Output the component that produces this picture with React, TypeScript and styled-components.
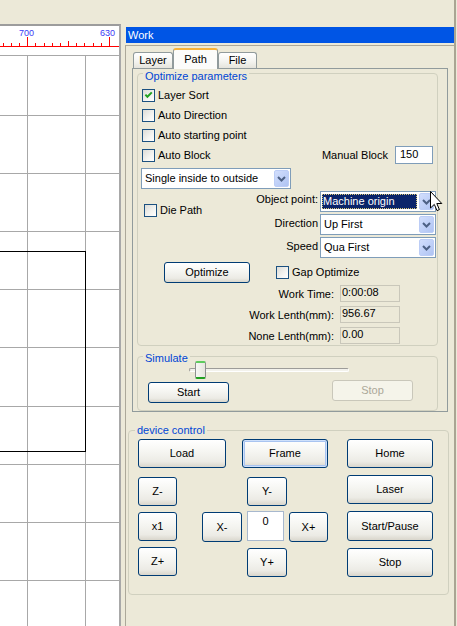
import React from "react";
import styled, { createGlobalStyle, css } from "styled-components";

const GlobalStyle = createGlobalStyle`
  html, body { margin: 0; padding: 0; background: #ECE9D8; overflow: hidden; }
  body { font-family: "Liberation Sans", Arial, sans-serif; font-size: 11px; color: #000; }
  * { box-sizing: border-box; }
`;

const Screen = styled.div`
  position: relative;
  display: flex;
  width: 457px;
  height: 626px;
  overflow: hidden;
  background: #ECE9D8;
`;

/* ---------- left drawing canvas ---------- */
const CanvasColumn = styled.div`
  width: 121px;
  flex: none;
  display: flex;
  flex-direction: column;
  padding-top: 24px;
`;

const CanvasFrame = styled.div`
  flex: 1;
  border-top: 2px solid #9C9C9C;
  border-right: 2px solid #A8A8A8;
  background: #fff;
  overflow: hidden;
  svg { display: block; }
`;

/* ---------- right dock ---------- */
const DockColumn = styled.div`
  flex: 1;
  display: flex;
  padding-left: 4px;
  padding-right: 1px;
`;

const Dock = styled.div`
  flex: 1;
  display: flex;
  flex-direction: column;
  border-right: 2px solid #A9A593;
`;

const TitleBar = styled.div`
  margin: 27px 0 0 1px;
  height: 16px;
  background: #0055E5;
  color: #fff;
  font-size: 11px;
  line-height: 16px;
  padding-left: 2px;
`;

const DockBody = styled.div`
  margin-top: 2px;
  flex: 1;
  border-top: 1px solid #ACA899;
  border-left: 1px solid #ACA899;
  display: flex;
  flex-direction: column;
  align-items: flex-start;
`;

/* ---------- tabs ---------- */
const TabControl = styled.div`
  margin: 2px 0 0 6px;
  width: 316px;
  display: flex;
  flex-direction: column;
`;

const TabStrip = styled.div`
  position: relative;
  z-index: 1;
  display: flex;
  align-items: flex-end;
  height: 20px;
  padding-left: 1px;
`;

const Tab = styled.div<{ $active?: boolean; $w: number }>`
  width: ${(p) => p.$w}px;
  height: 16px;
  border: 1px solid #919B9C;
  border-bottom: none;
  border-radius: 3px 3px 0 0;
  background: linear-gradient(#FFFFFF, #F4F4F0 55%, #E5E4DC);
  text-align: center;
  line-height: 15px;
  ${(p) =>
    p.$active &&
    css`
      height: 21px;
      margin-bottom: -1px;
      border-top: 2px solid #F7B23B;
      padding-top: 1px;
      line-height: 16px;
      background: #FCFCFA;
    `}
`;

const TabPage = styled.div`
  border: 1px solid #919B9C;
  padding: 4px 0 0 4px;
  display: flex;
  flex-direction: column;
  align-items: flex-start;
`;

/* ---------- group boxes ---------- */
const GroupBox = styled.div<{ $w: number; $mt?: number; $ml?: number }>`
  position: relative;
  width: ${(p) => p.$w}px;
  margin-top: ${(p) => p.$mt ?? 0}px;
  margin-left: ${(p) => p.$ml ?? 0}px;
  border: 1px solid #D0D0BF;
  border-radius: 4px;
  display: flex;
  flex-direction: column;
  align-items: flex-start;
`;

const GroupTitle = styled.span<{ $top: number; $left?: number }>`
  position: absolute;
  top: ${(p) => p.$top}px;
  left: ${(p) => p.$left ?? 5}px;
  padding: 0 2px;
  background: #ECE9D8;
  color: #0046D5;
  line-height: 13px;
  white-space: nowrap;
`;

/* ---------- checkbox ---------- */
const CheckBoxBox = styled.span`
  width: 13px;
  height: 13px;
  flex: none;
  border: 1px solid #1C5180;
  background: linear-gradient(135deg, #DCDCD7 0%, #F4F4F1 60%, #FFFFFF 100%);
  svg { display: block; }
`;

const CheckRow = styled.div<{ $ml?: number }>`
  display: flex;
  align-items: center;
  gap: 3px;
  height: 20px;
  margin-left: ${(p) => p.$ml ?? 0}px;
  line-height: 13px;
  white-space: nowrap;
`;

const Check = ({ checked }: { checked?: boolean }) => (
  <CheckBoxBox>
    {checked && (
      <svg width="11" height="11" viewBox="1 1 11 11">
        <path d="M3.4 5.6 L5.4 7.8 L9.8 3.4" fill="none" stroke="#21A121" strokeWidth="2" />
      </svg>
    )}
  </CheckBoxBox>
);

/* ---------- inputs ---------- */
const TextInput = styled.div<{ $w: number; $h: number }>`
  width: ${(p) => p.$w}px;
  height: ${(p) => p.$h}px;
  border: 1px solid #7F9DB9;
  background: #fff;
  padding-left: 4px;
  line-height: 15px;
`;

const SelectBox = styled.div<{ $w: number; $h: number; $ml?: number }>`
  width: ${(p) => p.$w}px;
  height: ${(p) => p.$h}px;
  margin-left: ${(p) => p.$ml ?? 0}px;
  border: 1px solid #7F9DB9;
  background: #fff;
  display: flex;
  align-items: stretch;
  padding: 1px;
`;

const SelectValue = styled.span<{ $focused?: boolean }>`
  flex: 1;
  display: flex;
  align-items: center;
  padding-left: 2px;
  line-height: 13px;
  white-space: nowrap;
  overflow: hidden;
  ${(p) =>
    p.$focused &&
    css`
      flex: none;
      width: 95px;
      margin: 1px 0 1px 0;
      padding-left: 1px;
      background: #0A246A;
      color: #fff;
      outline: 1px dotted #D8C878;
      outline-offset: -1px;
    `}
`;

const DropButton = styled.span`
  margin-left: auto;
  width: 15px;
  flex: none;
  border: 1px solid #BCCDF6;
  border-radius: 2px;
  background: linear-gradient(135deg, #D2DEFC 0%, #BFD0F8 55%, #AFC3F2 100%);
  display: flex;
  align-items: center;
  justify-content: center;
  svg { display: block; }
`;

const Select = ({ value, w, h, ml, focused }: { value: string; w: number; h: number; ml?: number; focused?: boolean }) => (
  <SelectBox $w={w} $h={h} $ml={ml}>
    <SelectValue $focused={focused}>{value}</SelectValue>
    <DropButton>
      <svg width="9" height="6" viewBox="0 0 9 6">
        <path d="M1 1 L4.5 4.5 L8 1" fill="none" stroke="#4D6185" strokeWidth="2" />
      </svg>
    </DropButton>
  </SelectBox>
);

const ReadField = styled.div`
  width: 60px;
  height: 17px;
  border: 1px solid #C9C7BA;
  background: #ECE9D8;
  padding-left: 1px;
  line-height: 13px;
`;

/* ---------- buttons ---------- */
const Button = styled.button<{ $w: number; $h: number; $focus?: boolean; $ml?: number; $mt?: number }>`
  width: ${(p) => p.$w}px;
  height: ${(p) => p.$h}px;
  margin-left: ${(p) => p.$ml ?? 0}px;
  margin-top: ${(p) => p.$mt ?? 0}px;
  flex: none;
  padding: 0;
  font-family: inherit;
  font-size: 11px;
  color: #000;
  line-height: 13px;
  border: 1px solid #003C74;
  border-radius: 3px;
  background: linear-gradient(#FFFFFF 0%, #F5F5F1 45%, #ECEBE5 80%, #D9D6CC 100%);
  ${(p) =>
    p.$focus &&
    css`
      box-shadow: inset 0 0 0 1px #CEE0FB, inset 0 0 0 2px #A9C4F0;
    `}
  &:disabled {
    border-color: #C9C7BA;
    color: #ACA899;
    background: #F5F4EA;
  }
`;

/* ---------- optimize parameter layout ---------- */
const OptimizeInner = styled.div`
  display: flex;
  flex-direction: column;
  align-items: stretch;
  width: 100%;
  padding: 11px 0 1px 4px;
`;

const SplitRow = styled.div`
  display: flex;
  align-items: center;
  justify-content: space-between;
  padding-right: 4px;
`;

const InlinePair = styled.div`
  display: flex;
  align-items: center;
  gap: 7px;
  line-height: 13px;
`;

const SelectSlot = styled.div`
  margin-top: 3px;
  margin-left: -1px;
`;

const OptionBlock = styled.div`
  display: flex;
  justify-content: space-between;
  align-items: flex-start;
  margin-top: 2px;
  padding: 0 1px 0 2px;
`;

const DiePathSlot = styled.div`
  padding-top: 9px;
`;

const LabeledGrid = styled.div`
  display: grid;
  grid-template-columns: auto 116px;
  grid-auto-rows: 21px;
  column-gap: 2px;
  row-gap: 2px;
`;

const GridLabel = styled.span<{ $pt?: number }>`
  justify-self: end;
  padding-top: ${(p) => p.$pt ?? 3}px;
  line-height: 13px;
  white-space: nowrap;
`;

const ActionRow = styled.div`
  display: flex;
  align-items: center;
  gap: 26px;
  margin-top: 4px;
  padding-left: 22px;
`;

const StatsGrid = styled.div`
  display: grid;
  grid-template-columns: 1fr 60px;
  column-gap: 6px;
  row-gap: 4px;
  margin-top: 2px;
  padding-right: 37px;
`;

const StatLabel = styled.span`
  justify-self: end;
  padding-top: 3px;
  line-height: 13px;
  white-space: nowrap;
`;

/* ---------- simulate ---------- */
const SimulateInner = styled.div`
  display: flex;
  flex-direction: column;
  width: 100%;
  padding: 4px 0 7px 0;
`;

const Slider = styled.div`
  position: relative;
  width: 160px;
  height: 18px;
  margin-left: 51px;
  padding-top: 7px;
`;

const SliderTrack = styled.div`
  height: 4px;
  border: 1px solid;
  border-color: #9D9C99 #FFFFFF #FFFFFF #9D9C99;
  border-radius: 2px;
  background: #F3F2EC;
`;

const SliderThumb = styled.div`
  position: absolute;
  left: 6px;
  top: 0;
  width: 11px;
  height: 18px;
  border: 1px solid #8E8F8F;
  border-top: 2px solid #5DCB5D;
  border-bottom: 2px solid #21A121;
  border-radius: 2px;
  background: linear-gradient(90deg, #F7F7F4, #E6E5DE);
`;

const SimButtons = styled.div`
  display: flex;
  align-items: flex-start;
  margin-top: 3px;
  padding: 0 24px 0 10px;
  justify-content: space-between;
`;

/* ---------- device control ---------- */
const DeviceInner = styled.div`
  display: flex;
  flex-direction: column;
  padding: 8px 0 17px 9px;
`;

const DeviceTopRow = styled.div`
  display: flex;
  gap: 16px;
  & > :last-child { margin-left: 3px; }
`;

const DeviceBottom = styled.div`
  display: flex;
  align-items: flex-start;
  margin-top: 7px;
`;

const ButtonColumn = styled.div<{ $ml?: number; $mt?: number; $gap: number }>`
  display: flex;
  flex-direction: column;
  gap: ${(p) => p.$gap}px;
  margin-left: ${(p) => p.$ml ?? 0}px;
  margin-top: ${(p) => p.$mt ?? 0}px;
`;

const JogGrid = styled.div`
  display: grid;
  grid-template-columns: 45px 42px 39px;
  grid-template-rows: 29px 30px 29px;
  row-gap: 6px;
  margin-left: 25px;
  margin-top: 2px;
  align-items: start;
`;

const StepInput = styled.div`
  width: 37px;
  height: 30px;
  margin-top: -1px;
  border: 1px solid #A7B8CE;
  background: #fff;
  text-align: center;
  padding-top: 3px;
  line-height: 13px;
`;

const Cursor = styled.svg`
  position: absolute;
  left: 430px;
  top: 191px;
`;

/* ---------- canvas drawing ---------- */
const ticks = Array.from({ length: 14 }, (_, i) => i - 3).map((k) => {
  const x = Math.round(27.3 + k * 8.17);
  const mod = ((k % 10) + 10) % 10;
  const h = mod === 0 ? 9 : mod === 5 ? 5 : 3;
  return { x, h, k };
});
const gridRows = [115, 173, 231, 289, 347, 406, 464, 522, 580];
const gridCols = [27, 85];

const CanvasDrawing = () => (
  <svg width="119" height="600" viewBox="0 26 119 600">
    <rect x="0" y="26" width="119" height="600" fill="#fff" />
    {ticks.map((t) => (
      <rect key={t.k} x={t.x} y={46 - t.h} width="1" height={t.h} fill="#FF0000" />
    ))}
    <rect x="0" y="46" width="119" height="1" fill="#FF0000" />
    <text x="26.5" y="36" fontSize="9" fill="#3B3BF5" textAnchor="middle" fontFamily="Liberation Sans, Arial, sans-serif">
      700
    </text>
    <text x="107.5" y="36" fontSize="9" fill="#3B3BF5" textAnchor="middle" fontFamily="Liberation Sans, Arial, sans-serif">
      630
    </text>
    <rect x="0" y="55" width="119" height="1" fill="#A8A8A8" />
    {gridCols.map((x) => (
      <rect key={`c${x}`} x={x} y="56" width="1" height="570" fill="#A8A8A8" />
    ))}
    {gridRows.map((y) => (
      <rect key={`r${y}`} x="0" y={y} width="119" height="1" fill="#A8A8A8" />
    ))}
    <rect x="-10" y="251.5" width="95.5" height="200" fill="none" stroke="#000" strokeWidth="1" />
  </svg>
);

export default function App() {
  return (
    <>
      <GlobalStyle />
      <Screen>
        <CanvasColumn>
          <CanvasFrame>
            <CanvasDrawing />
          </CanvasFrame>
        </CanvasColumn>

        <DockColumn>
          <Dock>
            <TitleBar>Work</TitleBar>
            <DockBody>
              <TabControl>
                <TabStrip>
                  <Tab $w={40}>Layer</Tab>
                  <Tab $w={45} $active>
                    Path
                  </Tab>
                  <Tab $w={39}>File</Tab>
                </TabStrip>
                <TabPage>
                  <GroupBox $w={301}>
                    <GroupTitle $top={-4}>Optimize parameters</GroupTitle>
                    <OptimizeInner>
                      <CheckRow>
                        <Check checked />
                        <span>Layer Sort</span>
                      </CheckRow>
                      <CheckRow>
                        <Check />
                        <span>Auto Direction</span>
                      </CheckRow>
                      <CheckRow>
                        <Check />
                        <span>Auto starting point</span>
                      </CheckRow>
                      <SplitRow>
                        <CheckRow>
                          <Check />
                          <span>Auto Block</span>
                        </CheckRow>
                        <InlinePair>
                          <span>Manual Block</span>
                          <TextInput $w={38} $h={18}>150</TextInput>
                        </InlinePair>
                      </SplitRow>
                      <SelectSlot>
                        <Select value="Single inside to outside" w={150} h={21} />
                      </SelectSlot>
                      <OptionBlock>
                        <DiePathSlot>
                          <CheckRow>
                            <Check />
                            <span>Die Path</span>
                          </CheckRow>
                        </DiePathSlot>
                        <LabeledGrid>
                          <GridLabel $pt={2}>Object point:</GridLabel>
                          <Select value="Machine origin" w={116} h={21} focused />
                          <GridLabel>Direction</GridLabel>
                          <Select value="Up First" w={116} h={21} />
                          <GridLabel>Speed</GridLabel>
                          <Select value="Qua First" w={116} h={21} />
                        </LabeledGrid>
                      </OptionBlock>
                      <ActionRow>
                        <Button $w={86} $h={21}>
                          Optimize
                        </Button>
                        <CheckRow>
                          <Check />
                          <span>Gap Optimize</span>
                        </CheckRow>
                      </ActionRow>
                      <StatsGrid>
                        <StatLabel>Work Time:</StatLabel>
                        <ReadField>0:00:08</ReadField>
                        <StatLabel>Work Lenth(mm):</StatLabel>
                        <ReadField>956.67</ReadField>
                        <StatLabel>None Lenth(mm):</StatLabel>
                        <ReadField>0.00</ReadField>
                      </StatsGrid>
                    </OptimizeInner>
                  </GroupBox>

                  <GroupBox $w={301} $mt={10}>
                    <GroupTitle $top={-5}>Simulate</GroupTitle>
                    <SimulateInner>
                      <Slider>
                        <SliderTrack />
                        <SliderThumb />
                      </Slider>
                      <SimButtons>
                        <Button $w={81} $h={21}>
                          Start
                        </Button>
                        <Button $w={81} $h={21} $mt={-2} disabled>
                          Stop
                        </Button>
                      </SimButtons>
                    </SimulateInner>
                  </GroupBox>
                </TabPage>
              </TabControl>

              <GroupBox $w={321} $mt={18} $ml={2}>
                <GroupTitle $top={-7} $left={6}>
                  device control
                </GroupTitle>
                <DeviceInner>
                  <DeviceTopRow>
                    <Button $w={88} $h={29}>
                      Load
                    </Button>
                    <Button $w={86} $h={29} $focus>
                      Frame
                    </Button>
                    <Button $w={86} $h={29}>
                      Home
                    </Button>
                  </DeviceTopRow>
                  <DeviceBottom>
                    <ButtonColumn $gap={6} $mt={2}>
                      <Button $w={39} $h={29}>Z-</Button>
                      <Button $w={39} $h={29}>x1</Button>
                      <Button $w={39} $h={29}>Z+</Button>
                    </ButtonColumn>
                    <JogGrid>
                      <span />
                      <Button $w={40} $h={29}>Y-</Button>
                      <span />
                      <Button $w={40} $h={30}>X-</Button>
                      <StepInput>0</StepInput>
                      <Button $w={39} $h={30}>X+</Button>
                      <span />
                      <Button $w={40} $h={29}>Y+</Button>
                      <span />
                    </JogGrid>
                    <ButtonColumn $gap={7} $ml={19}>
                      <Button $w={86} $h={29}>Laser</Button>
                      <Button $w={86} $h={30}>Start/Pause</Button>
                      <Button $w={86} $h={29}>Stop</Button>
                    </ButtonColumn>
                  </DeviceBottom>
                </DeviceInner>
              </GroupBox>
            </DockBody>
          </Dock>
        </DockColumn>

        <Cursor width="13" height="22" viewBox="0 0 13 22">
          <path
            d="M0.5 0.5 L0.5 17 L4.3 13.4 L7 19.6 L9.4 18.6 L6.8 12.5 L11.8 12.5 Z"
            fill="#fff"
            stroke="#000"
            strokeWidth="1"
            strokeLinejoin="miter"
          />
        </Cursor>
      </Screen>
    </>
  );
}
